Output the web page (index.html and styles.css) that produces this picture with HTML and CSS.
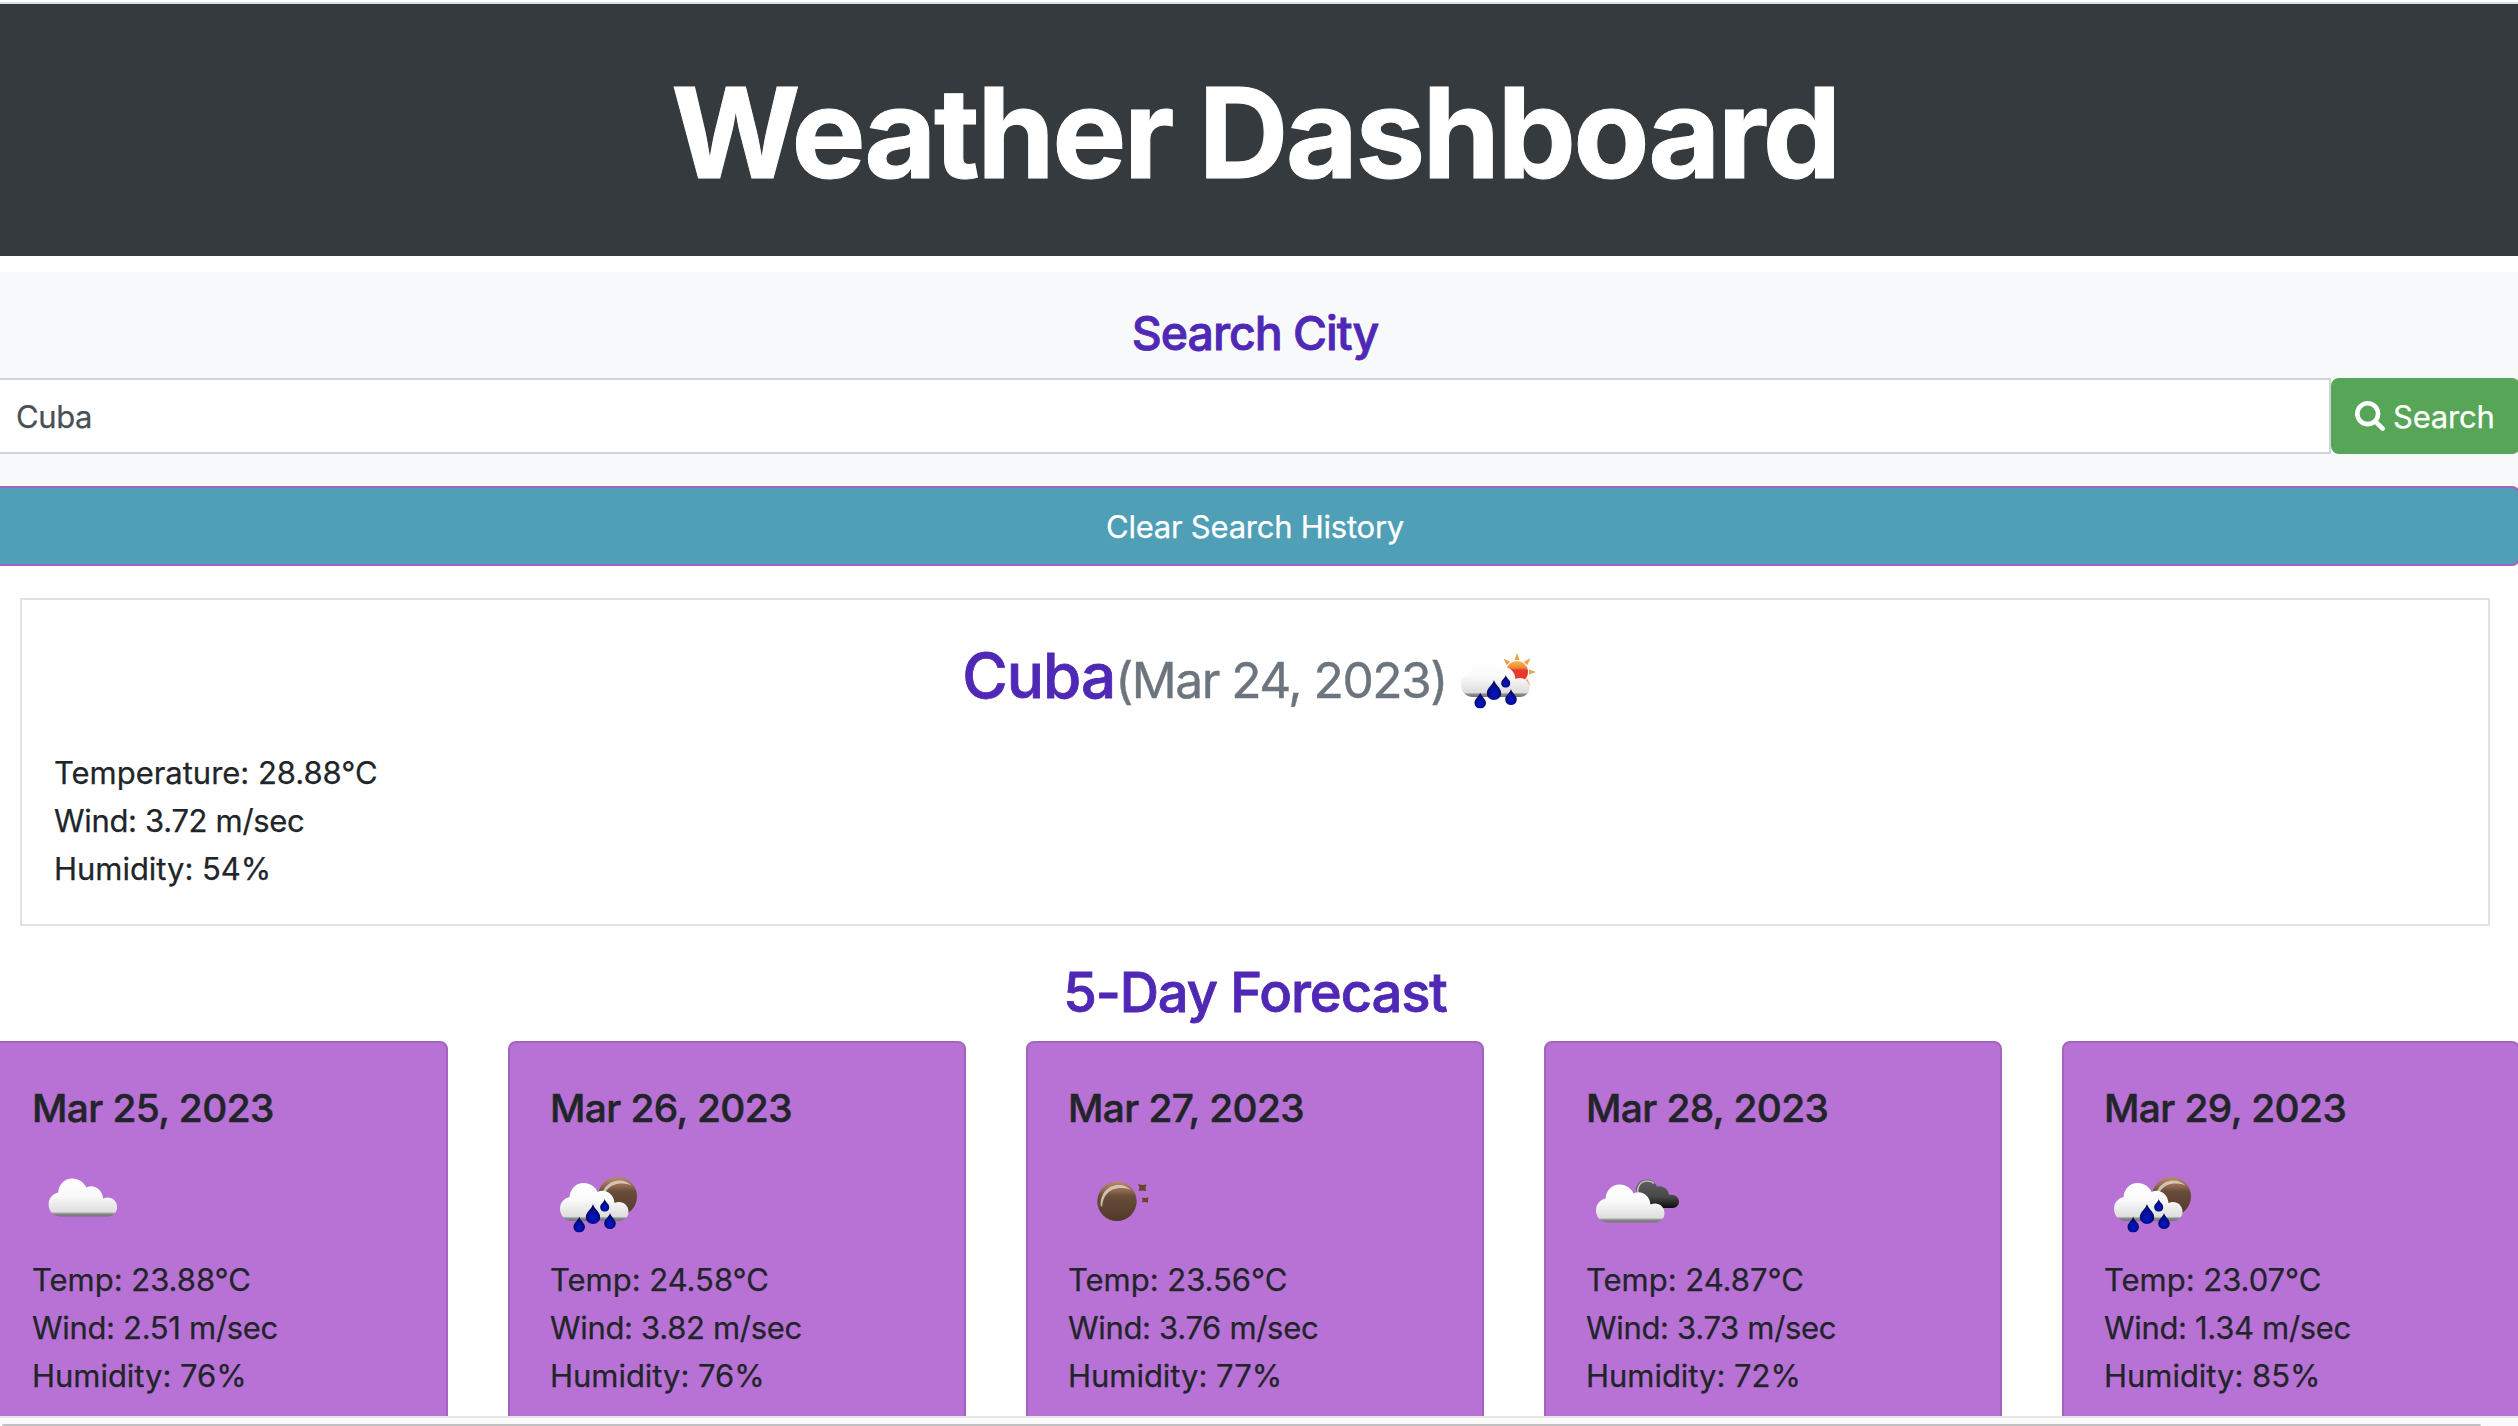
FILE: index.html
```html
<!DOCTYPE html>
<html lang="en">
<head>
<meta charset="utf-8">
<title>Weather Dashboard</title>
<link rel="stylesheet" href="styles.css">
</head>
<body>
<!-- shared shapes for the weather icons -->
<svg class="defs" width="0" height="0" aria-hidden="true">
  <defs>
    <linearGradient id="white" gradientUnits="userSpaceOnUse" x1="0" y1="34" x2="0" y2="73">
      <stop offset="0" stop-color="#fff"/><stop offset=".45" stop-color="#fafafa"/>
      <stop offset=".87" stop-color="#dedede"/><stop offset=".92" stop-color="#8a8a8a"/><stop offset="1" stop-color="#6e6e6e"/>
    </linearGradient>
    <linearGradient id="dark" gradientUnits="userSpaceOnUse" x1="0" y1="30" x2="0" y2="58">
      <stop offset="0" stop-color="#606060"/><stop offset=".6" stop-color="#484848"/><stop offset="1" stop-color="#0c0c0c"/>
    </linearGradient>
    <linearGradient id="moonFill" x1="0" y1="0" x2="0" y2="1">
      <stop offset="0" stop-color="#b78c6c"/><stop offset=".25" stop-color="#8a654c"/>
      <stop offset=".36" stop-color="#6a4d3b"/><stop offset="1" stop-color="#50392a"/>
    </linearGradient>
    <linearGradient id="sunFill" x1="0" y1="0" x2="0" y2="1">
      <stop offset="0" stop-color="#f5c04a"/><stop offset=".3" stop-color="#f0873a"/><stop offset=".42" stop-color="#e8392f"/><stop offset="1" stop-color="#ea3a30"/>
    </linearGradient>
    <radialGradient id="dropFill" cx=".5" cy=".68" r=".55">
      <stop offset="0" stop-color="#0617c9"/><stop offset=".5" stop-color="#040fa0"/><stop offset="1" stop-color="#050a55"/>
    </radialGradient>
    <symbol id="cloud" viewBox="0 0 100 100">
      <path fill="url(#white)" d="M22 72.500C15 72.500 10 67 10 60.500C10 54 14 50 19.500 48.500C20 40.500 26 34.500 33.500 34.500C40.500 34.500 46 39 47.500 43.500C55 39.500 64 45 64.500 54.500C72 51.500 78.500 56.500 78.500 63C78.500 69 74 72.500 69 72.500Z"/>
    </symbol>
    <symbol id="moon" viewBox="0 0 40 40">
      <circle cx="20" cy="20" r="19.500" fill="url(#moonFill)"/>
      <path d="M4 25C3 13 11 4 22 4C27 4 31 6 34 9C29 7 26 7 22 7C12 8 6 15 5.500 25Z" fill="#e6d7ca" opacity=".8"/>
    </symbol>
    <symbol id="drop" viewBox="0 0 12 16">
      <path d="M6 0C7 4 11.800 6.500 11.800 10.500A5.800 5.500 0 0 1 .2 10.500C.2 6.500 5 4 6 0Z" fill="url(#dropFill)"/>
    </symbol>
    <symbol id="rain" viewBox="0 0 100 100">
      <use href="#cloud" x="0" y="-1.500" width="100" height="100"/>
      <use href="#drop" x="23.200" y="66.500" width="12" height="16"/>
      <use href="#drop" x="35.500" y="54" width="15" height="20"/>
      <use href="#drop" x="50" y="49" width="9.500" height="12.700"/>
      <use href="#drop" x="54" y="63" width="12" height="16"/>
    </symbol>
  </defs>
</svg>

<header class="masthead"><h1>Weather Dashboard</h1></header>

<main class="page">
  <section class="search">
    <h4>Search City</h4>
    <div class="search-row">
      <div class="search-input">Cuba</div>
      <div class="search-btn">
        <svg viewBox="0 128 1664 1664" width="30" height="30"><path fill="#fff" d="M1152 832q0-185-131.500-316.500T704 384 387.500 515.500 256 832t131.500 316.500T704 1280t316.500-131.500T1152 832zm512 832q0 52-38 90t-90 38q-54 0-90-38l-343-342q-179 124-399 124-143 0-273.500-55.500t-225-150-150-225T0 832t55.500-273.500 150-225 225-150T704 128t273.500 55.500 225 150 150 225T1408 832q0 220-124 399l343 343q37 37 37 90z"/></svg>
        <span>Search</span>
      </div>
    </div>
    <div class="clear-btn">Clear Search History</div>
  </section>

  <section class="today">
    <h2><span>Cuba<small>(Mar 24, 2023)</small></span>
      <svg viewBox="0 0 100 100" width="100" height="100">
        <g fill="#eda04c">
          <path id="ray" d="M63.500 34L66 27L68.500 34Z"/>
          <use href="#ray" transform="rotate(45 66 46)"/>
          <use href="#ray" transform="rotate(90 66 46)"/>
          <use href="#ray" transform="rotate(135 66 46)"/>
          <use href="#ray" transform="rotate(-45 66 46)"/>
        </g>
        <circle cx="66" cy="46" r="11" fill="url(#sunFill)"/>
        <use href="#rain" width="100" height="100"/>
      </svg>
    </h2>
    <p>Temperature: 28.88°C</p>
    <p class="wind">Wind: 3.72 m/sec</p>
    <p>Humidity: 54%</p>
  </section>

  <h3>5-Day Forecast</h3>
  <section class="forecast">
    <article class="day">
      <h5>Mar 25, 2023</h5>
      <svg viewBox="0 0 100 100" width="100" height="100"><use href="#cloud" x="6.600" y="-6" width="100" height="100"/></svg>
      <p>Temp: 23.88°C</p><p class="wind">Wind: 2.51 m/sec</p><p>Humidity: 76%</p>
    </article>
    <article class="day">
      <h5>Mar 26, 2023</h5>
      <svg viewBox="0 0 100 100" width="100" height="100"><use href="#moon" x="47.500" y="26.500" width="40" height="40"/><use href="#rain" width="100" height="100"/></svg>
      <p>Temp: 24.58°C</p><p class="wind">Wind: 3.82 m/sec</p><p>Humidity: 76%</p>
    </article>
    <article class="day">
      <h5>Mar 27, 2023</h5>
      <svg viewBox="0 0 100 100" width="100" height="100"><use href="#moon" x="28.700" y="31" width="40.500" height="40.500"/>
        <path fill="#65452f" d="M70 34L74 35L78.500 34.500L77.500 38L78 41L74 40.500L70.500 41L71.500 38ZM74 47.500L77 48L80.500 47.500L80 50L80 52.500L76.500 52L74 52.500L74.500 50Z"/></svg>
      <p>Temp: 23.56°C</p><p class="wind">Wind: 3.76 m/sec</p><p>Humidity: 77%</p>
    </article>
    <article class="day">
      <h5>Mar 28, 2023</h5>
      <svg viewBox="0 0 100 100" width="100" height="100">
        <path fill="url(#dark)" d="M50 42C49 35 54 29.500 61 29.500C65.500 29.500 69 32 71 36.500C77 35 82.500 39 83 45C88.500 43.500 93 47 93 51.500C93 55.500 90 58 86 58L60 58Z"/>
        <path fill="none" stroke="#bdbdbd" stroke-width="1.600" d="M51.500 43C51 36 55 31 61 31C64 31 66.500 32 68 33.500"/>
        <use href="#cloud" width="100" height="100"/></svg>
      <p>Temp: 24.87°C</p><p class="wind">Wind: 3.73 m/sec</p><p>Humidity: 72%</p>
    </article>
    <article class="day">
      <h5>Mar 29, 2023</h5>
      <svg viewBox="0 0 100 100" width="100" height="100"><use href="#moon" x="47.500" y="26.500" width="40" height="40"/><use href="#rain" width="100" height="100"/></svg>
      <p>Temp: 23.07°C</p><p class="wind">Wind: 1.34 m/sec</p><p>Humidity: 85%</p>
    </article>
  </section>
</main>

<footer class="scrollbar"><div class="thumb"></div></footer>
</body>
</html>
```
FILE: styles.css
```css
* { box-sizing: border-box; }

body {
  display: flex;
  flex-direction: column;
  height: 1426px;
  margin: 0;
  overflow: hidden;
  background: #fff;
  color: #212529;
  font: 400 31px/48px Inter, "Noto Sans", sans-serif;
  -webkit-text-stroke: .25px currentColor;
}

h1, h2, h3, h4, h5, p { margin: 0; font-weight: 500; }
h2, h3, h4, h5 { -webkit-text-stroke: .8px currentColor; }
p { font-weight: 400; letter-spacing: -.03px; }
svg { display: block; flex: none; }
.defs { position: absolute; }

/* The page is wider than the window and sits scrolled 10px to the right. */
.masthead, .page {
  width: 2530px;
  margin-left: -10px;
  text-align: center;
}

.masthead {
  flex: none;
  height: 254px;
  margin-top: 2px;
  border-top: 2px solid #dcdcdc;
  padding-top: 52px;
  background: #353a3e;
}
.masthead h1 {
  color: #fff;
  font-size: 124.5px;
  font-weight: 700;
  line-height: 154px;
  letter-spacing: -2.64px;
  -webkit-text-stroke: 1px #fff;
}

.page { flex: 1; min-height: 0; overflow: hidden; padding-top: 16px; }

.search { padding-top: 32px; background: #f8f9fb; }
.search h4 {
  margin-bottom: 16px;
  color: #4f28b5;
  font-size: 46.5px;
  line-height: 58px;
  letter-spacing: -1.05px;
}
.search-row { display: flex; height: 76px; margin-bottom: 32px; }
.search-input {
  flex: 1;
  border: 2px solid #ced4da;
  padding: 13px 24px 11px;
  background: #fff;
  color: #495057;
  text-align: left;
  letter-spacing: -.4px;
}
.search-btn {
  display: flex;
  align-items: center;
  gap: 8px;
  width: 189px;
  padding-left: 24px;
  border-radius: 8px;
  background: #57a556;
  color: #fff;
  letter-spacing: -.2px;
}
.search-btn span { padding-top: 1px; }
.clear-btn {
  height: 80px;
  border: 2px solid #a464bd;
  border-radius: 8px;
  background: #4f9fb6;
  color: #fff;
  line-height: 78px;
  letter-spacing: -.24px;
}

.today {
  height: 328px;
  margin: 32px 30px;
  border: 2px solid #dee2e6;
  padding: 26px 32px 31px;
  text-align: left;
}
.today h2 {
  display: flex;
  justify-content: center;
  gap: 4px;
  height: 100px;
  margin-bottom: 23px;
  padding-left: 3px;
  color: #4f28b5;
  font-size: 62px;
  line-height: 100px;
  letter-spacing: -.95px;
}
.today small {
  color: #6c757d;
  font-size: 49.7px;
  font-weight: 400;
  line-height: 1;
  letter-spacing: -1.5px;
  -webkit-text-stroke: .4px #6c757d;
}
.today .wind, .day .wind { letter-spacing: -.32px; }

h3 {
  margin-bottom: 15px;
  padding-top: 1px;
  color: #4f28b5;
  font-size: 54.3px;
  line-height: 67px;
  letter-spacing: -1.08px;
}

.forecast {
  display: grid;
  grid-template-columns: repeat(5, 458px);
  gap: 60px;
  height: 420px;
  text-align: left;
}
.day {
  border: 2px solid #a464bd;
  border-radius: 8px;
  padding: 41px 40px;
  background: #b871d5;
}
.day h5 {
  margin-bottom: 18px;
  font-size: 38.8px;
  line-height: 48px;
  letter-spacing: -.57px;
  -webkit-text-stroke: .5px currentColor;
}
.day svg { margin-bottom: 6px; }

.scrollbar {
  flex: none;
  height: 10px;
  border-top: 2px solid #e8e8e8;
  padding: 6px 37px 0 2px;
  background: #fafafa;
}
.thumb { height: 2px; border-radius: 2px 2px 0 0; background: #c1c1c1; }
```
